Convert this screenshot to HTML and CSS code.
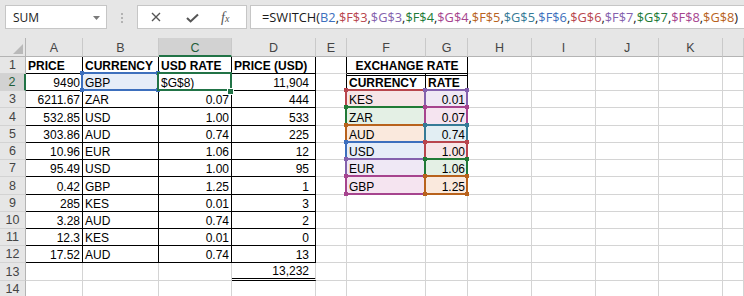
FILE: index.html
```html
<!DOCTYPE html>
<html lang="en">
<head>
<meta charset="utf-8">
<title>SWITCH</title>
<link rel="stylesheet" href="styles.css">
</head>
<body>
<div class="app">
  <div class="fbar">
    <div class="namebox"><span>SUM</span><svg class="caret" width="7" height="4" viewBox="0 0 7 4"><path d="M0 0H7L3.5 4Z"/></svg></div>
    <div class="grip"><i></i><i></i><i></i></div>
    <div class="fbtns">
      <svg class="ico-x" width="10" height="10" viewBox="0 0 10 10"><path d="M1 1L9 9M9 1L1 9"/></svg>
      <svg class="ico-ok" width="13" height="10" viewBox="0 0 13 10"><path d="M1 5L4.6 8.4L12 1.4"/></svg>
      <span class="fx"><span class="fx-f">f</span><span class="fx-x">x</span></span>
    </div>
    <div class="finput">=SWITCH(<span class="blue">B2</span>,<span class="red">$F$3</span>,<span class="purple">$G$3</span>,<span class="green">$F$4</span>,<span class="magenta">$G$4</span>,<span class="orange">$F$5</span>,<span class="teal">$G$5</span>,<span class="blue">$F$6</span>,<span class="red">$G$6</span>,<span class="purple">$F$7</span>,<span class="green">$G$7</span>,<span class="magenta">$F$8</span>,<span class="orange">$G$8</span>)</div>
  </div>

  <div class="sheet">
    <!-- column headers -->
    <div class="corner"></div>
    <div class="ch">A</div><div class="ch">B</div><div class="ch sel">C</div><div class="ch">D</div><div class="ch">E</div><div class="ch">F</div><div class="ch">G</div><div class="ch">H</div><div class="ch">I</div><div class="ch">J</div><div class="ch">K</div><div class="ch"></div>

    <!-- row 1 -->
    <div class="rh">1</div>
    <div class="c b k">PRICE</div>
    <div class="c b k">CURRENCY</div>
    <div class="c b k">USD RATE</div>
    <div class="c b k">PRICE (USD)</div>
    <div class="c kr"></div>
    <div class="c b k mg">EXCHANGE RATE</div>
    <div class="c"></div><div class="c"></div><div class="c"></div><div class="c"></div><div class="c"></div>

    <!-- row 2 -->
    <div class="rh sel">2</div>
    <div class="c n k">9490</div>
    <div class="c k hl blue"><span class="ref"></span>GBP</div>
    <div class="c k act">$G$8)<span class="cur"></span></div>
    <div class="c n k pd">11,904</div>
    <div class="c kr"></div>
    <div class="c b k dt">CURRENCY</div>
    <div class="c b k dt">RATE</div>
    <div class="c"></div><div class="c"></div><div class="c"></div><div class="c"></div><div class="c"></div>

    <!-- row 3 -->
    <div class="rh">3</div>
    <div class="c n k">6211.67</div>
    <div class="c k">ZAR</div>
    <div class="c n k">0.07</div>
    <div class="c n k pd">444</div>
    <div class="c kr"></div>
    <div class="c k hl red"><span class="ref"></span>KES</div>
    <div class="c n k hl purple"><span class="ref"></span>0.01</div>
    <div class="c"></div><div class="c"></div><div class="c"></div><div class="c"></div><div class="c"></div>

    <!-- row 4 -->
    <div class="rh">4</div>
    <div class="c n k">532.85</div>
    <div class="c k">USD</div>
    <div class="c n k">1.00</div>
    <div class="c n k pd">533</div>
    <div class="c kr"></div>
    <div class="c k hl green"><span class="ref"></span>ZAR</div>
    <div class="c n k hl magenta"><span class="ref"></span>0.07</div>
    <div class="c"></div><div class="c"></div><div class="c"></div><div class="c"></div><div class="c"></div>

    <!-- row 5 -->
    <div class="rh">5</div>
    <div class="c n k">303.86</div>
    <div class="c k">AUD</div>
    <div class="c n k">0.74</div>
    <div class="c n k pd">225</div>
    <div class="c kr"></div>
    <div class="c k hl orange"><span class="ref"></span>AUD</div>
    <div class="c n k hl teal"><span class="ref"></span>0.74</div>
    <div class="c"></div><div class="c"></div><div class="c"></div><div class="c"></div><div class="c"></div>

    <!-- row 6 -->
    <div class="rh">6</div>
    <div class="c n k">10.96</div>
    <div class="c k">EUR</div>
    <div class="c n k">1.06</div>
    <div class="c n k pd">12</div>
    <div class="c kr"></div>
    <div class="c k hl blue"><span class="ref"></span>USD</div>
    <div class="c n k hl red"><span class="ref"></span>1.00</div>
    <div class="c"></div><div class="c"></div><div class="c"></div><div class="c"></div><div class="c"></div>

    <!-- row 7 -->
    <div class="rh">7</div>
    <div class="c n k">95.49</div>
    <div class="c k">USD</div>
    <div class="c n k">1.00</div>
    <div class="c n k pd">95</div>
    <div class="c kr"></div>
    <div class="c k hl purple"><span class="ref"></span>EUR</div>
    <div class="c n k hl green"><span class="ref"></span>1.06</div>
    <div class="c"></div><div class="c"></div><div class="c"></div><div class="c"></div><div class="c"></div>

    <!-- row 8 -->
    <div class="rh">8</div>
    <div class="c n k">0.42</div>
    <div class="c k">GBP</div>
    <div class="c n k">1.25</div>
    <div class="c n k pd">1</div>
    <div class="c kr"></div>
    <div class="c k hl magenta"><span class="ref"></span>GBP</div>
    <div class="c n k hl orange"><span class="ref"></span>1.25</div>
    <div class="c"></div><div class="c"></div><div class="c"></div><div class="c"></div><div class="c"></div>

    <!-- row 9 -->
    <div class="rh">9</div>
    <div class="c n k">285</div>
    <div class="c k">KES</div>
    <div class="c n k">0.01</div>
    <div class="c n k pd">3</div>
    <div class="c"></div><div class="c"></div><div class="c"></div><div class="c"></div><div class="c"></div><div class="c"></div><div class="c"></div><div class="c"></div>

    <!-- row 10 -->
    <div class="rh">10</div>
    <div class="c n k">3.28</div>
    <div class="c k">AUD</div>
    <div class="c n k">0.74</div>
    <div class="c n k pd">2</div>
    <div class="c"></div><div class="c"></div><div class="c"></div><div class="c"></div><div class="c"></div><div class="c"></div><div class="c"></div><div class="c"></div>

    <!-- row 11 -->
    <div class="rh">11</div>
    <div class="c n k">12.3</div>
    <div class="c k">KES</div>
    <div class="c n k">0.01</div>
    <div class="c n k pd">0</div>
    <div class="c"></div><div class="c"></div><div class="c"></div><div class="c"></div><div class="c"></div><div class="c"></div><div class="c"></div><div class="c"></div>

    <!-- row 12 -->
    <div class="rh">12</div>
    <div class="c n k">17.52</div>
    <div class="c k">AUD</div>
    <div class="c n k">0.74</div>
    <div class="c n k pd">13</div>
    <div class="c"></div><div class="c"></div><div class="c"></div><div class="c"></div><div class="c"></div><div class="c"></div><div class="c"></div><div class="c"></div>

    <!-- row 13 -->
    <div class="rh">13</div>
    <div class="c"></div>
    <div class="c"></div>
    <div class="c"></div>
    <div class="c n pd dbl">13,232</div>
    <div class="c"></div><div class="c"></div><div class="c"></div><div class="c"></div><div class="c"></div><div class="c"></div><div class="c"></div><div class="c"></div>

    <!-- row 14 -->
    <div class="rh">14</div>
    <div class="c"></div><div class="c"></div><div class="c"></div><div class="c"></div><div class="c"></div><div class="c"></div><div class="c"></div><div class="c"></div><div class="c"></div><div class="c"></div><div class="c"></div><div class="c"></div>
  </div>
</div>
</body>
</html>
```

FILE: styles.css
```css
* { box-sizing: border-box; }
html, body { margin: 0; padding: 0; background: #fff; }
body { width: 744px; height: 296px; overflow: hidden; }

.app { width: 744px; }

/* palette for reference highlights */
.blue    { --c: #3d6fbd; --f: #e6edf8; }
.red     { --c: #b8454d; --f: #f7e5e7; }
.purple  { --c: #8461ad; --f: #efe8f5; }
.green   { --c: #217a36; --f: #e4f0e5; }
.magenta { --c: #a6448e; --f: #f5e4f0; }
.orange  { --c: #b8621c; --f: #fae9dd; }
.teal    { --c: #357a96; --f: #e2eef3; }

/* ---------- formula bar ---------- */
.fbar {
  height: 38px;
  background: #e6e6e6;
  display: flex;
  align-items: flex-start;
  padding-top: 5px;
  overflow: hidden;
}
.namebox {
  margin-left: 5px;
  width: 102px;
  height: 24px;
  background: #fff;
  border: 1px solid #c6c6c6;
  display: flex;
  align-items: center;
  justify-content: space-between;
  padding: 0 6px 0 7px;
  font: 12px "Open Sans", "Liberation Sans", sans-serif;
  color: #222;
}
.caret { fill: #7a7a7a; margin-top: 1px; }
.grip {
  margin-left: 14px;
  width: 2px;
  height: 24px;
  display: flex;
  flex-direction: column;
  gap: 2px;
  padding-top: 8px;
}
.grip i { display: block; width: 2px; height: 2px; background: #b3b3b3; }
.fbtns {
  margin-left: 14px;
  width: 110px;
  height: 24px;
  background: #fff;
  border: 1px solid #c6c6c6;
  display: flex;
  align-items: center;
}
.ico-x { margin-left: 13px; stroke: #555; stroke-width: 1.4; fill: none; }
.ico-ok { margin-left: 25px; margin-top: 2px; stroke: #555; stroke-width: 2.1; fill: none; }
.fx {
  margin-left: 22px;
  color: #555;
  font-family: "Liberation Serif", serif;
  font-style: italic;
  line-height: 1;
  margin-top: -1px;
}
.fx-f { font-size: 14px; }
.fx-x { font-size: 10px; margin-left: 0; }
.finput {
  margin-left: 3px;
  flex: 1;
  margin-right: -20px;
  height: 24px;
  background: #fff;
  border: 1px solid #c6c6c6;
  padding-left: 11px;
  font: 12.8px/22px "Open Sans", "Liberation Sans", sans-serif;
  color: #1a1a1a;
  white-space: nowrap;
}
.finput span { color: var(--c); }

/* ---------- sheet grid ---------- */
.sheet {
  display: grid;
  grid-template-columns: 26px 57px 76px 73px 84px 31px 79px 42px 64px 64px 63px 64px 1fr;
  grid-template-rows: 19px 17px 17px 17px 18px 17px 17px 17px 18px 17px 17px 17px 17px 18px 17px;
}
.corner {
  position: relative;
  background: #e6e6e6;
  border-right: 1px solid #b4b4b4;
  border-bottom: 1px solid #b4b4b4;
}
.corner::after {
  content: "";
  position: absolute;
  right: 2px;
  bottom: 2px;
  border-left: 10px solid transparent;
  border-bottom: 10px solid #b9b9b9;
}
.ch {
  background: #e6e6e6;
  border-right: 1px solid #c9c9c9;
  border-bottom: 1px solid #b4b4b4;
  display: flex;
  align-items: flex-end;
  justify-content: center;
  font: 12.5px/14px "Liberation Sans", Arial, sans-serif;
  color: #444;
  padding-bottom: 1px;
}
.ch.sel {
  background: #d2d2d2;
  border-bottom: 2px solid #217346;
  padding-bottom: 0;
  color: #1f5e3a;
}
.rh {
  background: #e6e6e6;
  border-right: 1px solid #b4b4b4;
  border-bottom: 1px solid #d3d3d3;
  display: flex;
  align-items: flex-end;
  justify-content: center;
  font: 12.5px/14px "Liberation Sans", Arial, sans-serif;
  color: #444;
  padding-bottom: 1px;
}
.rh.sel {
  background: #d2d2d2;
  border-right: 2px solid #217346;
  color: #1f5e3a;
}

.c {
  background: #fff;
  border-right: 1px solid #d4d4d4;
  border-bottom: 1px solid #d4d4d4;
  padding: 0 2px;
  display: flex;
  align-items: flex-end;
  justify-content: flex-start;
  font: 12px/14px "Liberation Sans", Arial, sans-serif;
  color: #000;
  white-space: nowrap;
  min-width: 0;
}
.n { justify-content: flex-end; }
.pd { padding-right: 6px; }
.b { font-weight: bold; }
.k { border-right-color: #000; border-bottom-color: #000; }
.kr { border-right-color: #000; }
.mg { grid-column: span 2; justify-content: center; }
.dt { box-shadow: inset 0 1px #fff, inset 0 2px #000; }
.dbl { border-bottom: 3px double #000; }

/* reference highlight boxes */
.hl { position: relative; background: var(--f); }
.ref {
  position: absolute;
  left: -2px;
  top: -2px;
  right: -1px;
  bottom: -1px;
  border: 2px solid var(--c);
}
.ref::before {
  content: "";
  position: absolute;
  left: -3px;
  top: -3px;
  right: -3px;
  bottom: -3px;
  background:
    linear-gradient(var(--c), var(--c)) left top / 4px 4px no-repeat,
    linear-gradient(var(--c), var(--c)) right top / 4px 4px no-repeat,
    linear-gradient(var(--c), var(--c)) left bottom / 4px 4px no-repeat,
    linear-gradient(var(--c), var(--c)) right bottom / 4px 4px no-repeat;
}

/* active cell */
.act { position: relative; z-index: 2; }
.cur {
  position: absolute;
  left: -2px;
  top: -2px;
  right: -1px;
  bottom: -1px;
  border: 2px solid #217346;
}
.cur::after {
  content: "";
  position: absolute;
  right: -3px;
  bottom: -5px;
  width: 5px;
  height: 5px;
  background: #217346;
  box-shadow: 0 0 0 1px #fff;
}
```
